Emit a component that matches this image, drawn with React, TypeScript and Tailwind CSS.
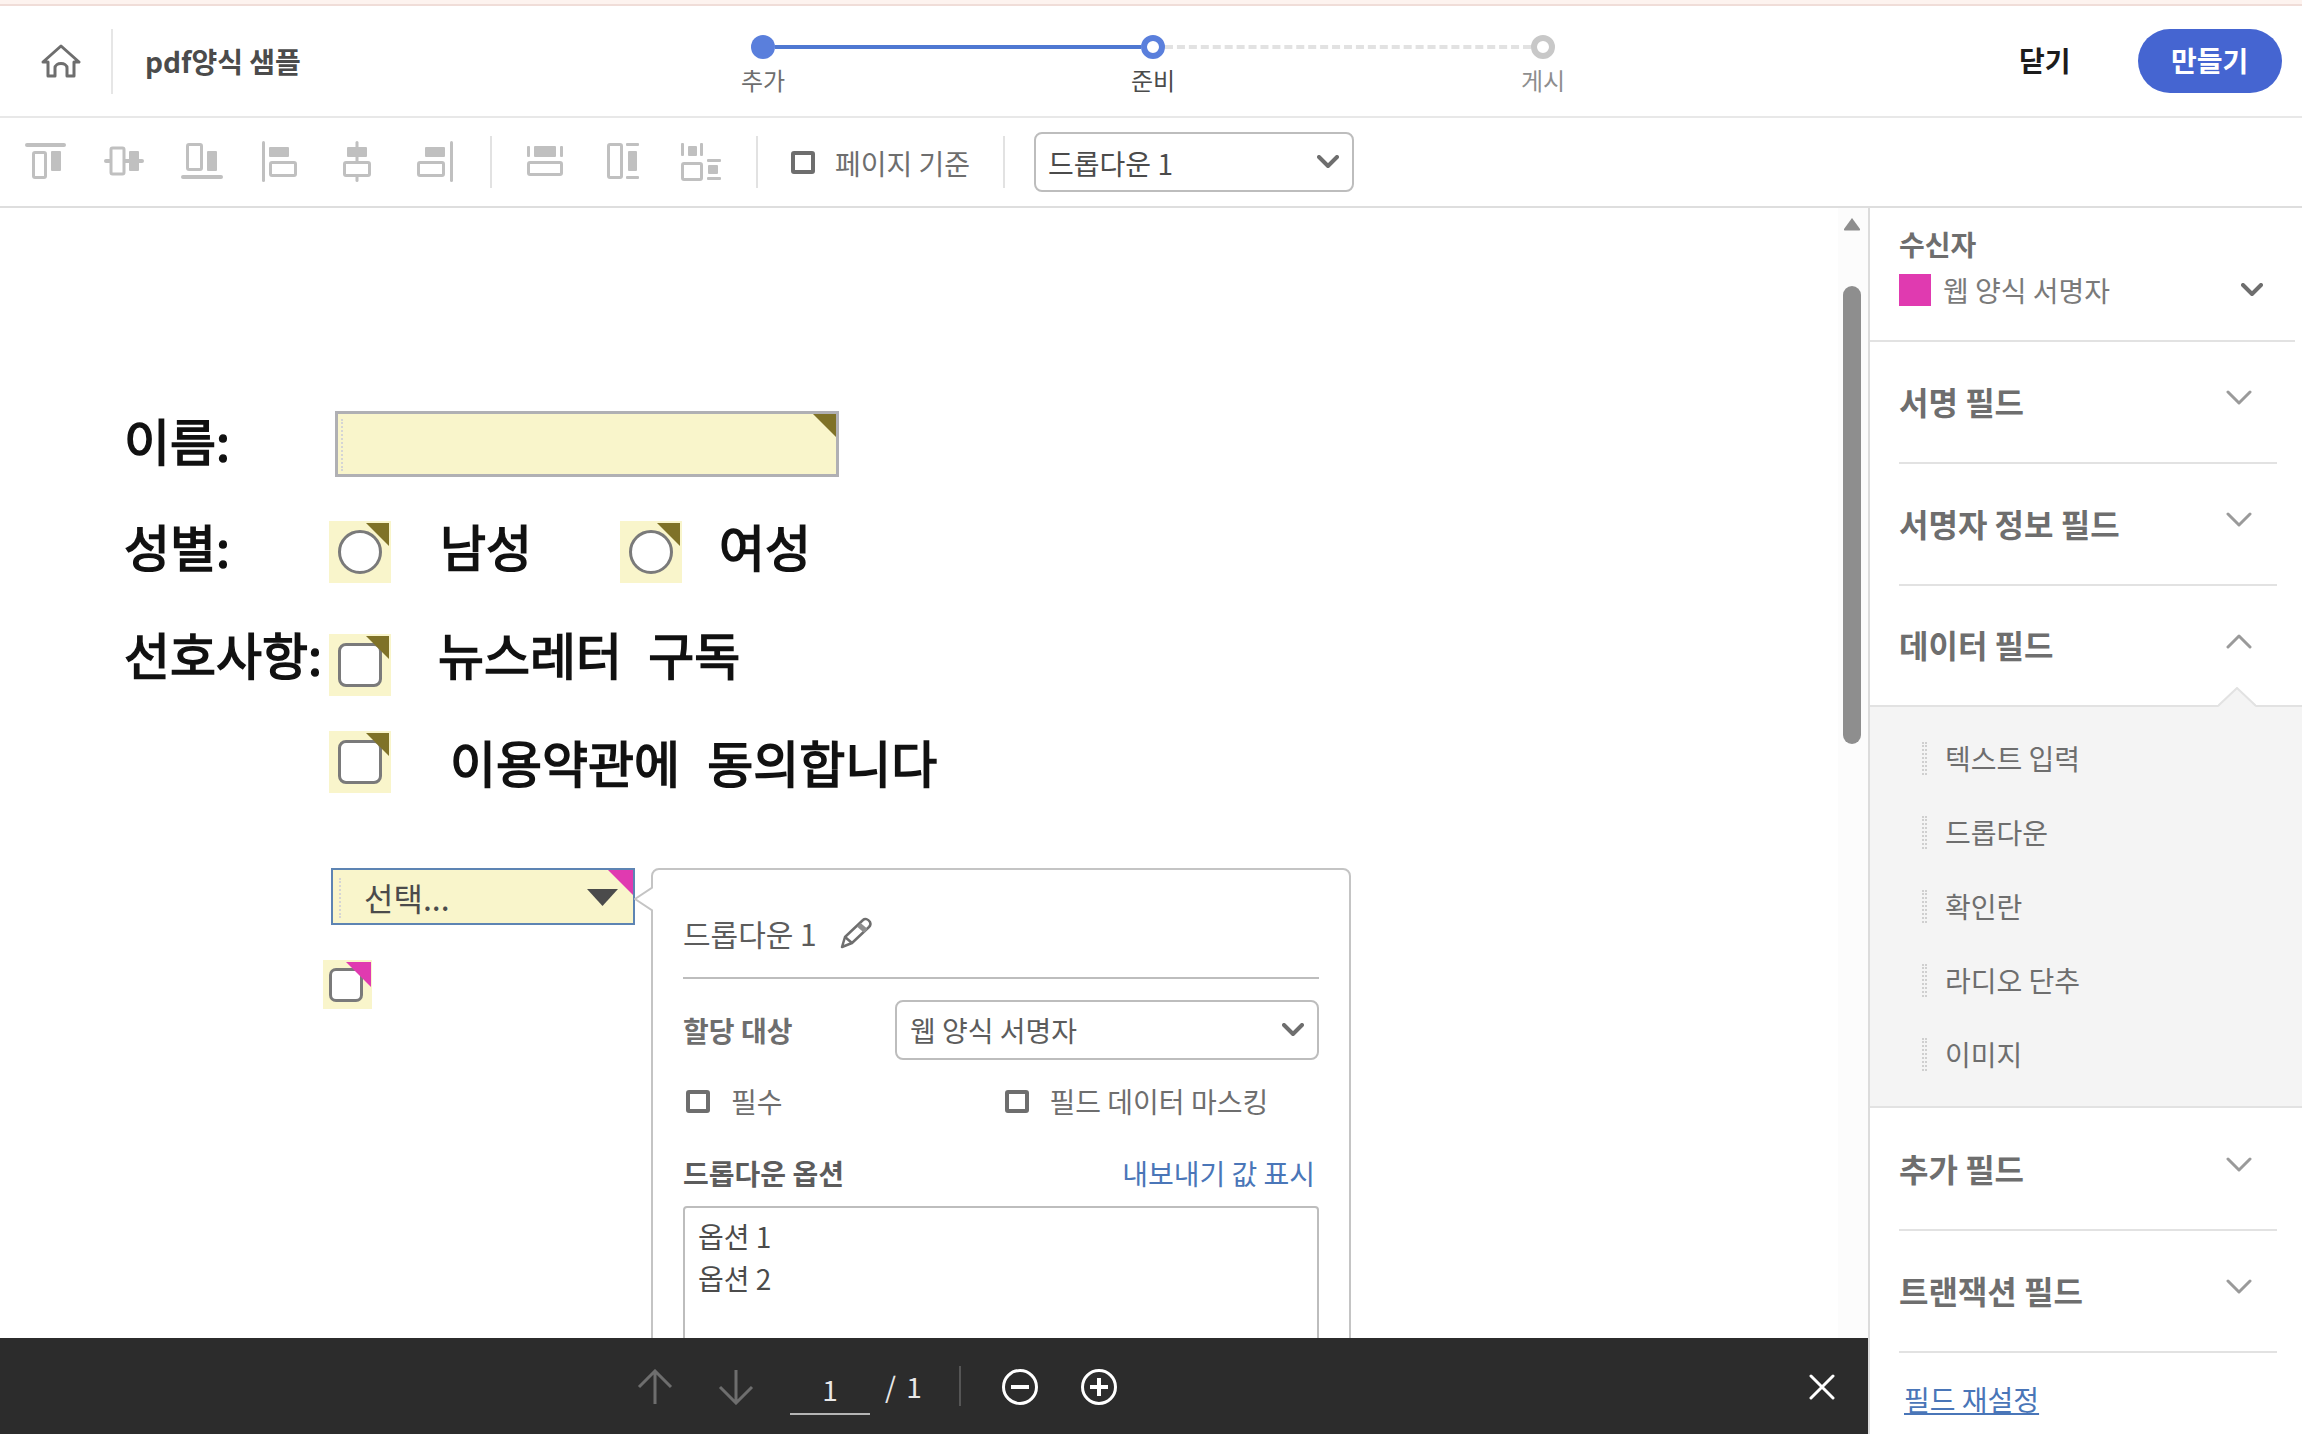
const font = "font-['Noto_Sans_CJK_KR','Noto_Sans',sans-serif]"

function Chevron({ up, thin }: { up?: boolean; thin?: boolean }) {
	// two kinds in the picture: small heavy select arrows and wide thin accordion arrows
	const w = thin ? 26 : 22
	const h = thin ? 16 : 14
	const pts = up
		? `2,${h - 2} ${w / 2},3 ${w - 2},${h - 2}`
		: `2,2 ${w / 2},${h - 3} ${w - 2},2`
	return (
		<svg width={w} height={h} viewBox={`0 0 ${w} ${h}`} className="shrink-0">
			<polyline
				points={pts}
				fill="none"
				stroke={thin ? "#9a9a9a" : "#6e6e6e"}
				strokeWidth={thin ? 3 : 4}
				strokeLinecap="round"
				strokeLinejoin="round"
			/>
		</svg>
	)
}

function Box({ className = "" }: { className?: string }) {
	return <span className={`block h-[23px] w-[24px] shrink-0 rounded-[3px] border-[4px] border-[#6e6e6e] bg-white ${className}`} />
}

function Sep({ className = "" }: { className?: string }) {
	return <div className={`h-[52px] w-[2px] shrink-0 bg-[#e2e2e2] ${className}`} />
}

// toolbar icons use the screen position as their viewBox
function AlignIcon({ vb, w, children, className = "" }: { vb: string; w: number; children: React.ReactNode; className?: string }) {
	return (
		<svg width={w} height={44} viewBox={vb} className={`shrink-0 ${className}`} fill="#c0c0c0">
			{children}
		</svg>
	)
}

function Outline({ x, y, w, h }: { x: number; y: number; w: number; h: number }) {
	return <rect x={x + 1.5} y={y + 1.5} width={w - 3} height={h - 3} rx={1.5} fill="none" stroke="#c0c0c0" strokeWidth={3} />
}

function Toolbar() {
	return (
		<div className="flex h-[90px] shrink-0 items-center border-b-2 border-[#dedede] pl-[25px]">
			<AlignIcon vb="25 141 41 44" w={41}>
				<rect x="25" y="144" width="41" height="4" rx="2" />
				<Outline x={32} y={152} w={15} h={28} />
				<rect x="51" y="152" width="10" height="20" rx="1" />
			</AlignIcon>
			<AlignIcon vb="104 141 40 44" w={40} className="ml-[38px]">
				<rect x="104" y="160" width="40" height="4" rx="2" />
				<rect x="111" y="149" width="13" height="26" rx="1.5" fill="#fff" stroke="#c0c0c0" strokeWidth="3" />
				<rect x="129" y="152" width="10" height="20" rx="1" />
			</AlignIcon>
			<AlignIcon vb="181 141 42 44" w={42} className="ml-[37px]">
				<rect x="181" y="176" width="42" height="4" rx="2" />
				<Outline x={186} y={144} w={17} h={28} />
				<rect x="207" y="152" width="10" height="20" rx="1" />
			</AlignIcon>
			<AlignIcon vb="262 141 35 44" w={35} className="ml-[39px]">
				<rect x="262" y="142" width="3" height="41" rx="1.5" />
				<rect x="269" y="148" width="20" height="10" rx="1" />
				<Outline x={269} y={162} w={28} h={16} />
			</AlignIcon>
			<AlignIcon vb="343 141 28 44" w={28} className="ml-[46px]">
				<rect x="355.5" y="142" width="3" height="41" rx="1.5" />
				<rect x="347" y="148" width="20" height="10" rx="1" />
				<rect x="344.5" y="163.5" width="25" height="13" rx="1.5" fill="#fff" stroke="#c0c0c0" strokeWidth="3" />
			</AlignIcon>
			<AlignIcon vb="417 141 36 44" w={36} className="ml-[46px]">
				<rect x="450" y="142" width="3" height="41" rx="1.5" />
				<rect x="425" y="148" width="20" height="10" rx="1" />
				<Outline x={417} y={162} w={28} h={16} />
			</AlignIcon>
			<Sep className="ml-[37px]" />
			<AlignIcon vb="527 141 36 44" w={36} className="ml-[35px]">
				<rect x="527" y="147" width="3" height="11" rx="1" />
				<rect x="560" y="147" width="3" height="11" rx="1" />
				<rect x="534" y="147" width="22" height="11" rx="1" />
				<Outline x={527} y={162} w={36} h={15} />
			</AlignIcon>
			<AlignIcon vb="607 141 32 44" w={32} className="ml-[44px]">
				<Outline x={607} y={144} w={16} h={36} />
				<rect x="626" y="144" width="13" height="3" rx="1" />
				<rect x="628" y="152" width="9" height="20" rx="1" />
				<rect x="626" y="177" width="13" height="3" rx="1" />
			</AlignIcon>
			<AlignIcon vb="681 141 40 44" w={40} className="ml-[42px]">
				<rect x="681" y="144" width="3" height="13" rx="1" />
				<rect x="688" y="147" width="9" height="10" rx="1" />
				<rect x="700" y="144" width="3" height="13" rx="1" />
				<Outline x={681} y={163} w={22} h={19} />
				<rect x="707" y="160" width="14" height="3" rx="1" />
				<rect x="708" y="166" width="10" height="9" rx="1" />
				<rect x="707" y="178" width="14" height="3" rx="1" />
			</AlignIcon>
			<Sep className="ml-[35px]" />
			<Box className="ml-[33px]" />
			<span className="ml-[20px] mt-[2px] text-[28px] leading-none text-[#6e6e6e]">페이지 기준</span>
			<Sep className="ml-[33px]" />
			<div className="ml-[29px] flex h-[60px] w-[320px] shrink-0 items-center justify-between rounded-[8px] border-2 border-[#bdbdbd] pl-[12px] pr-[13px]">
				<span className="mt-[2px] text-[28px] text-[#4b4b4b]">드롭다운 1</span>
				<Chevron />
			</div>
		</div>
	)
}

function Header() {
	return (
		<div className="flex h-[112px] shrink-0 items-center border-b-2 border-[#e8e8e8]">
			<svg width="40" height="34" viewBox="0 0 40 34" className="ml-[41px] shrink-0" fill="none" stroke="#6e6e6e" strokeWidth="3" strokeLinejoin="round">
				<path d="M20 2 L38 18 H33 V32 H26 V24 C26 18 14 18 14 24 V32 H7 V18 H2 Z" />
			</svg>
			<div className="ml-[30px] h-[65px] w-[2px] shrink-0 bg-[#e6e6e6]" />
			<span className="ml-[32px] w-[401px] shrink-0 text-[28px] font-bold leading-none text-[#4b4b4b]">pdf양식 샘플</span>
			<div className="ml-[205px] flex w-[804px] shrink-0 items-start self-start pt-[29px]">
				<Step label="추가" labelClass="text-[#6e6e6e]" dotClass="bg-[#5a7fdc]" />
				<div className="mt-[10px] h-[4px] flex-1 bg-[#4f78d2]" />
				<Step label="준비" labelClass="text-[#4b4b4b]" dotClass="border-[6px] border-[#5a7fdc] bg-white" />
				<div className="mt-[10px] h-[4px] flex-1 border-t-4 border-dashed border-[#e2e2e2]" />
				<Step label="게시" labelClass="text-[#8e8e8e]" dotClass="border-[6px] border-[#c8c8c8] bg-white" />
			</div>
			<span className="ml-[464px] mt-[-2px] shrink-0 text-[28px] font-bold leading-none text-[#1c1c1c]">닫기</span>
			<div className="ml-[67px] flex h-[64px] w-[144px] shrink-0 items-center justify-center rounded-full bg-[#4565d1] pb-[2px] text-[28px] font-bold text-white">
				만들기
			</div>
		</div>
	)
}

function Step({ label, labelClass, dotClass }: { label: string; labelClass: string; dotClass: string }) {
	return (
		<div className="flex w-[24px] shrink-0 flex-col items-center">
			<div className={`h-[24px] w-[24px] rounded-full ${dotClass}`} />
			<span className={`mt-[3px] whitespace-nowrap text-[24px] leading-[36px] ${labelClass}`}>{label}</span>
		</div>
	)
}

function Corner({ pink, small }: { pink?: boolean; small?: boolean }) {
	const s = small ? 25 : 23
	return (
		<svg width={s} height={s} viewBox="0 0 24 24" className="absolute right-0 top-0">
			<polygon points="0,0 24,0 24,24" fill={pink ? "#e03ab0" : "#7f7228"} />
		</svg>
	)
}

function RadioField({ className }: { className: string }) {
	return (
		<div className={`absolute flex h-[62px] w-[62px] items-center justify-center bg-[#f9f5cb] ${className}`}>
			<span className="block h-[44px] w-[44px] rounded-full border-[3px] border-[#7a7a7a] bg-white" />
			<span className="absolute right-[2px] top-[2px] h-[23px] w-[23px]">
				<Corner />
			</span>
		</div>
	)
}

function CheckField({ className }: { className: string }) {
	return (
		<div className={`absolute flex h-[62px] w-[62px] items-center justify-center bg-[#f9f5cb] ${className}`}>
			<span className="block h-[44px] w-[44px] rounded-[8px] border-[3px] border-[#7a7a7a] bg-white" />
			<span className="absolute right-[2px] top-[2px] h-[23px] w-[23px]">
				<Corner />
			</span>
		</div>
	)
}

function Label({ className, children }: { className: string; children: React.ReactNode }) {
	return (
		<span className={`absolute whitespace-pre text-[50px] leading-[60px] text-[#111] [-webkit-text-stroke:1.6px_#111] ${className}`}>
			{children}
		</span>
	)
}

function Popover() {
	return (
		<div className="absolute left-[651px] top-[660px] h-[520px] w-[700px] rounded-[8px] border-2 border-[#c4c4c4] bg-white pl-[30px] pr-[30px]">
			<svg width="19" height="26" viewBox="0 0 19 26" className="absolute left-[-19px] top-[16px]">
				<polyline points="19,1 1,13 19,25" fill="#fff" stroke="#c4c4c4" strokeWidth="2" />
			</svg>
			<div className="flex h-[109px] items-center border-b-2 border-[#bdbdbd] pt-[19px]">
				<span className="text-[30px] leading-none text-[#5c5c5c]">드롭다운 1</span>
				<svg width="34" height="32" viewBox="0 0 34 32" className="ml-[22px]" fill="none" stroke="#6e6e6e" strokeWidth="2.5" strokeLinejoin="round">
					<path d="M3 30 L6 20 L24 3 C26 1 29 2 31 5 C32 7 32 8 30 10 L13 26 Z" />
					<path d="M6 20 L13 26" />
					<path d="M20 8 L27 14" strokeWidth="5" stroke="#8e8e8e" />
				</svg>
			</div>
			<div className="mt-[21px] flex items-center justify-between">
				<span className="text-[28px] font-bold text-[#6e6e6e]">할당 대상</span>
				<div className="flex h-[60px] w-[424px] items-center justify-between rounded-[8px] border-2 border-[#bdbdbd] pl-[13px] pr-[13px]">
					<span className="text-[28px] text-[#5c5c5c]">웹 양식 서명자</span>
					<Chevron />
				</div>
			</div>
			<div className="mt-[27px] flex items-center pl-[3px]">
				<Box />
				<span className="ml-[21px] text-[28px] leading-none text-[#6e6e6e]">필수</span>
				<Box className="ml-[222px]" />
				<span className="ml-[21px] text-[28px] leading-none text-[#6e6e6e]">필드 데이터 마스킹</span>
			</div>
			<div className="mt-[44px] flex items-center justify-between pr-[4px]">
				<span className="text-[28px] font-bold leading-none text-[#5c5c5c]">드롭다운 옵션</span>
				<span className="text-[28px] leading-none text-[#4a76b8]">내보내기 값 표시</span>
			</div>
			<div className="mt-[19px] h-[200px] rounded-[4px] border-2 border-[#bdbdbd] px-[13px] pt-[7px] text-[28px] leading-[42px] text-[#4b4b4b]">
				<div>옵션 1</div>
				<div>옵션 2</div>
			</div>
		</div>
	)
}

function Canvas() {
	return (
		<div className="relative flex-1 overflow-hidden bg-white">
			<Label className="left-[124px] top-[201px]">이름:</Label>
			<div className="absolute left-[335px] top-[203px] h-[66px] w-[504px] border-[3px] border-[#b0b0b4] bg-[#f9f5cb]">
				<div className="absolute left-[3px] top-[5px] h-[52px] border-l-2 border-dotted border-[#d5d5d5]" />
				<Corner />
			</div>

			<Label className="left-[124px] top-[307px]">성별:</Label>
			<RadioField className="left-[329px] top-[313px]" />
			<Label className="left-[440px] top-[307px]">남성</Label>
			<RadioField className="left-[620px] top-[313px]" />
			<Label className="left-[719px] top-[307px]">여성</Label>

			<Label className="left-[124px] top-[415px]">선호사항:</Label>
			<CheckField className="left-[329px] top-[426px]" />
			<Label className="left-[438px] top-[415px] [word-spacing:15px]">뉴스레터 구독</Label>

			<CheckField className="left-[329px] top-[523px]" />
			<Label className="left-[450px] top-[523px] [word-spacing:16px]">이용약관에 동의합니다</Label>

			<div className="absolute left-[331px] top-[660px] flex h-[57px] w-[304px] items-center border-2 border-[#5d84b3] bg-[#f9f5cb] pl-[31px]">
				<div className="absolute left-[6px] top-[8px] h-[40px] border-l-2 border-dotted border-[#d5d5d5]" />
				<span className="text-[32px] leading-none text-[#4b4b4b]">선택...</span>
				<svg width="31" height="17" viewBox="0 0 31 17" className="absolute left-[254px] top-[19px]">
					<polygon points="0,0 31,0 15.5,17" fill="#4b4b4b" />
				</svg>
				<Corner pink small />
			</div>

			<div className="absolute left-[323px] top-[752px] flex h-[49px] w-[49px] items-center justify-center bg-[#f9f5cb]">
				<span className="ml-[-3px] block h-[34px] w-[34px] rounded-[7px] border-[3px] border-[#7a7a7a] bg-white" />
				<span className="absolute right-[1px] top-[2px] h-[25px] w-[25px]">
					<Corner pink small />
				</span>
			</div>

			<Popover />
		</div>
	)
}

function Scrollbar() {
	return (
		<div className="flex w-[30px] shrink-0 flex-col items-center bg-[#fcfcfc] pr-[2px] pt-[9px]">
			<svg width="18" height="14" viewBox="0 0 18 14">
				<path d="M9 1 L17 12 Q17.5 13.5 16 13.5 H2 Q0.5 13.5 1 12 Z" fill="#8e8e8e" />
			</svg>
			<div className="mt-[55px] h-[458px] w-[18px] rounded-full bg-[#8e8e8e]" />
		</div>
	)
}

function BottomBar() {
	return (
		<div className="flex h-[96px] shrink-0 items-center bg-[#2c2c2c] pl-[637px] text-white">
			<svg width="36" height="36" viewBox="0 0 36 36" className="mt-[2px]" fill="none" stroke="#6e6e6e" strokeWidth="3">
				<path d="M18 35 V2 M2 18 L18 2 L34 18" />
			</svg>
			<svg width="36" height="36" viewBox="0 0 36 36" className="ml-[45px] mt-[2px]" fill="none" stroke="#6e6e6e" strokeWidth="3">
				<path d="M18 1 V34 M2 18 L18 34 L34 18" />
			</svg>
			<div className="ml-[36px] flex h-[58px] w-[80px] items-center justify-center border-b-2 border-[#b5b5b5] pt-[8px] text-[28px] leading-none text-[#e8e8e8]">
				1
			</div>
			<span className="ml-[15px] text-[28px] leading-none text-[#e8e8e8] [word-spacing:4px]">/ 1</span>
			<div className="ml-[37px] h-[40px] w-[2px] bg-[#555]" />
			<svg width="36" height="36" viewBox="0 0 36 36" className="ml-[41px] mt-[2px]" fill="none" stroke="#fff">
				<circle cx="18" cy="18" r="16.5" strokeWidth="3" />
				<path d="M9 18 H27" strokeWidth="4" />
			</svg>
			<svg width="36" height="36" viewBox="0 0 36 36" className="ml-[43px] mt-[2px]" fill="none" stroke="#fff">
				<circle cx="18" cy="18" r="16.5" strokeWidth="3" />
				<path d="M9 18 H27 M18 9 V27" strokeWidth="4" />
			</svg>
			<svg width="26" height="26" viewBox="0 0 26 26" className="ml-[692px] mt-[2px]" fill="none" stroke="#fff" strokeWidth="3" strokeLinecap="round">
				<path d="M2 2 L24 24 M24 2 L2 24" />
			</svg>
		</div>
	)
}

function AccordionHead({ title, up, border = true, className = "" }: { title: string; up?: boolean; border?: boolean; className?: string }) {
	return (
		<div className={`ml-[29px] mr-[25px] flex items-center justify-between pr-[25px] ${border ? "border-b-2 border-[#e2e2e2]" : ""} ${className}`}>
			<span className="mt-[-2px] text-[32px] font-bold leading-none text-[#6e6e6e]">{title}</span>
			<span className="mt-[-8px] flex">
				<Chevron up={up} thin />
			</span>
		</div>
	)
}

const dataFields = ["텍스트 입력", "드롭다운", "확인란", "라디오 단추", "이미지"]

function Sidebar() {
	return (
		<div className="flex w-[434px] shrink-0 flex-col border-l-2 border-[#dcdcdc] bg-white">
			<div className="mr-[7px] h-[134px] border-b-2 border-[#e2e2e2] pl-[29px] pt-[18px]">
				<div className="text-[28px] font-bold leading-[36px] text-[#6e6e6e]">수신자</div>
				<div className="mt-[12px] flex items-center pr-[32px]">
					<div className="h-[32px] w-[32px] shrink-0 bg-[#e03ab0]" />
					<span className="ml-[12px] flex-1 text-[28px] leading-none text-[#7a7a7a]">웹 양식 서명자</span>
					<Chevron />
				</div>
			</div>
			<AccordionHead title="서명 필드" className="h-[122px]" />
			<AccordionHead title="서명자 정보 필드" className="h-[122px]" />
			<AccordionHead title="데이터 필드" up border={false} className="h-[119px] pb-[2px]" />
			<div className="relative h-[403px] border-y-2 border-[#e2e2e2] bg-[#f4f4f4] pb-[15px] pt-[14px]">
				<svg width="38" height="20" viewBox="0 0 38 20" className="absolute left-[348px] top-[-20px]">
					<polygon points="0,20 19,1 38,20" fill="#f4f4f4" />
					<polyline points="0,19 19,1 38,19" fill="none" stroke="#e2e2e2" strokeWidth="2" />
				</svg>
				{dataFields.map((name) => (
					<div key={name} className="flex h-[74px] items-center pl-[52px]">
						<div className="h-[33px] w-[5px] border-x-2 border-dotted border-[#cfcfcf]" />
						<span className="ml-[18px] text-[28px] leading-none text-[#6e6e6e]">{name}</span>
					</div>
				))}
			</div>
			<AccordionHead title="추가 필드" className="h-[123px]" />
			<AccordionHead title="트랜잭션 필드" className="h-[122px]" />
			<a className="ml-[34px] mt-[29px] w-fit text-[28px] leading-[34px] text-[#4a76b8] underline">필드 재설정</a>
		</div>
	)
}

export default function App() {
	return (
		<div className={`flex h-[1434px] w-[2302px] flex-col overflow-hidden bg-white ${font}`}>
			<div className="h-[6px] shrink-0 border-b-2 border-[#f0ddd8] bg-[#fdf3ef]" />
			<Header />
			<Toolbar />
			<div className="flex min-h-0 flex-1">
				<div className="flex w-[1868px] shrink-0 flex-col">
					<div className="flex min-h-0 flex-1">
						<Canvas />
						<Scrollbar />
					</div>
					<BottomBar />
				</div>
				<Sidebar />
			</div>
		</div>
	)
}
